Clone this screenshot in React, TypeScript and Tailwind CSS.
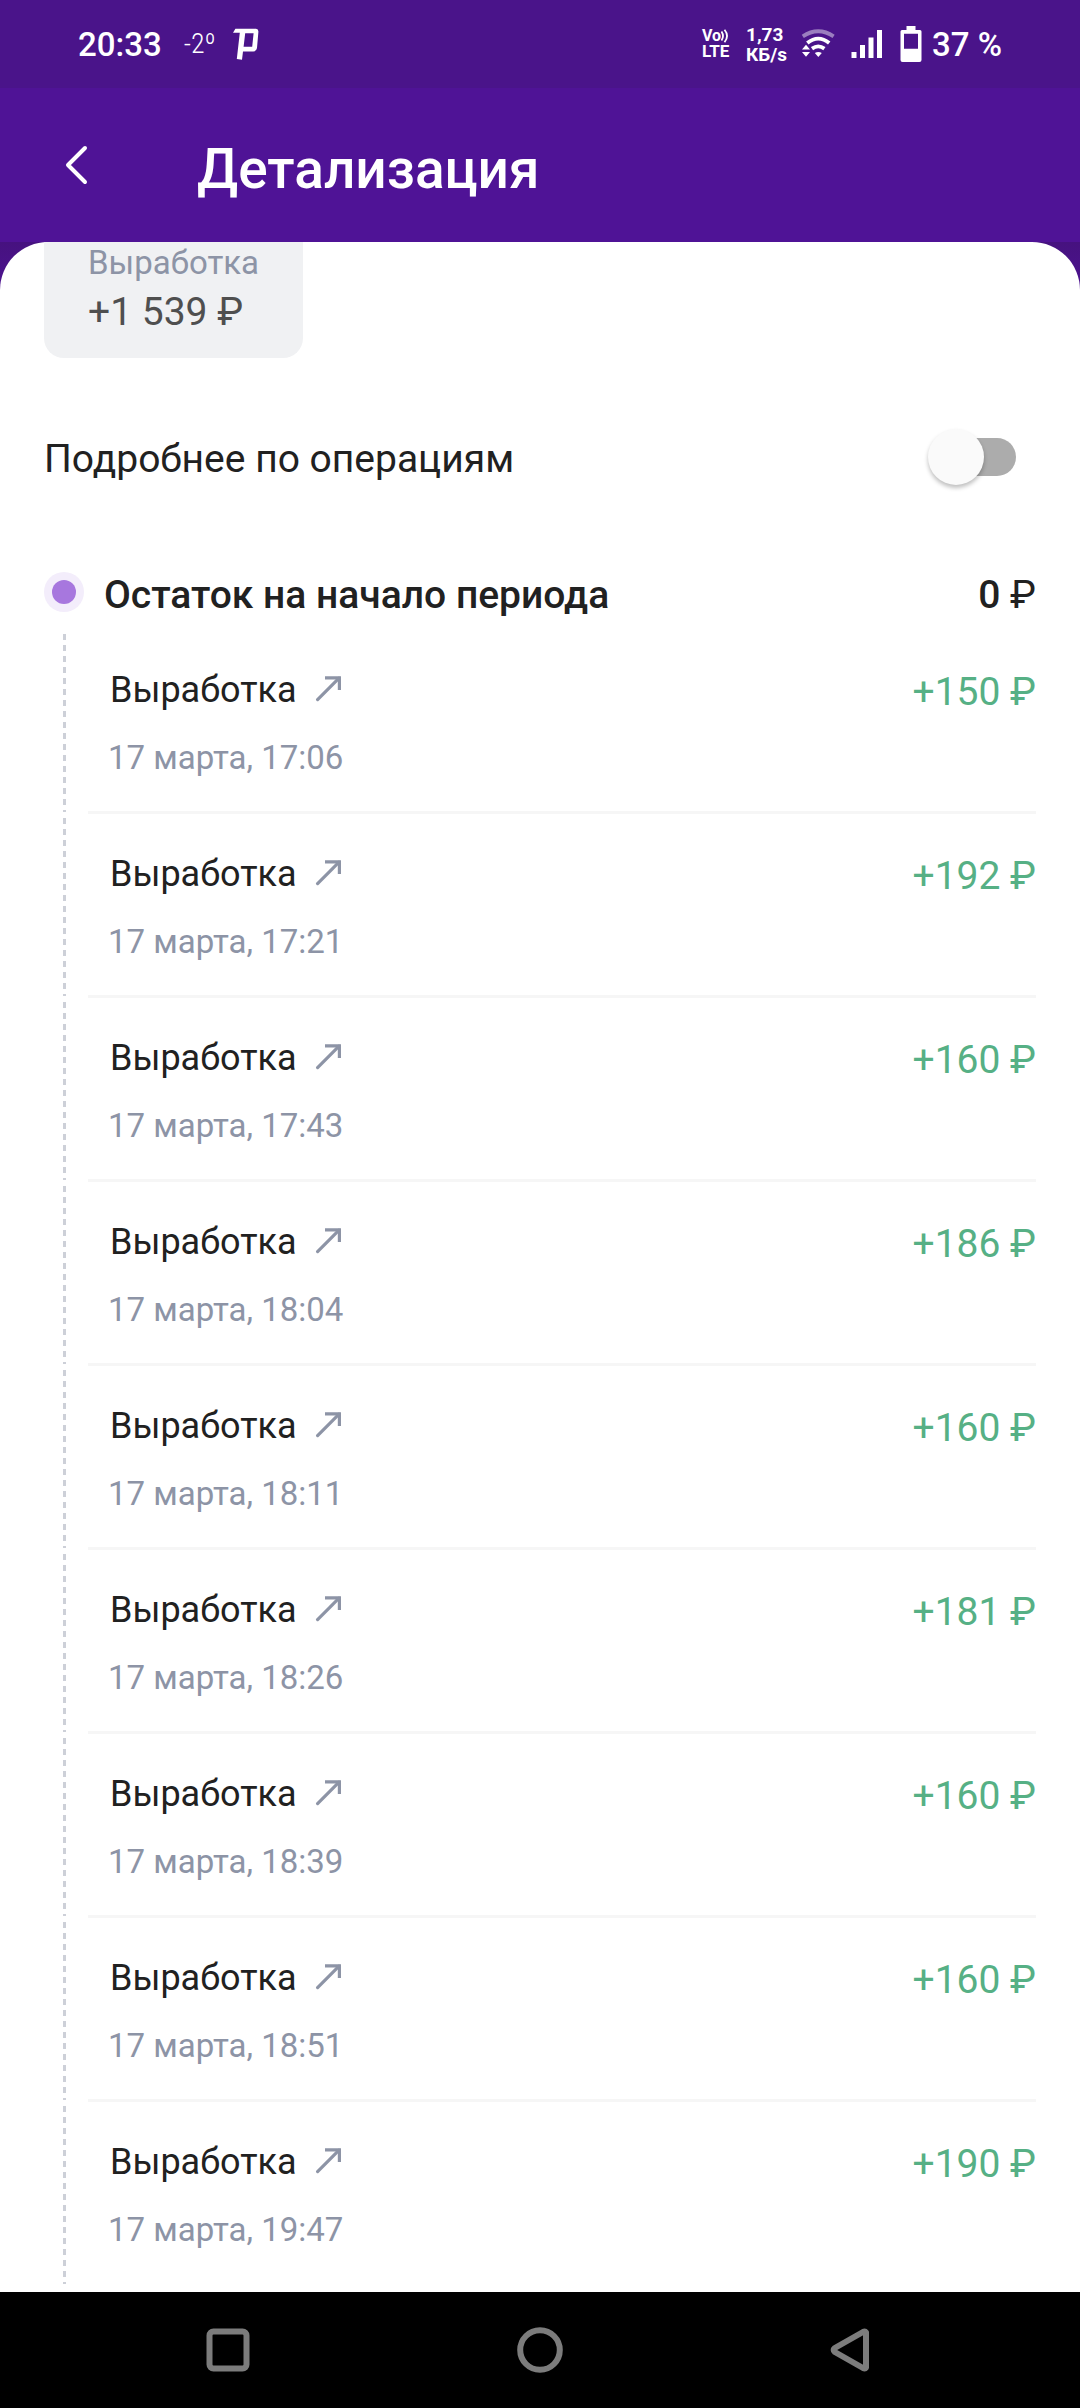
import { useState } from "react";

type Operation = {
  title: string;
  date: string;
  amount: string;
};

const operations: Operation[] = [
  { title: "Выработка", date: "17 марта, 17:06", amount: "+150 ₽" },
  { title: "Выработка", date: "17 марта, 17:21", amount: "+192 ₽" },
  { title: "Выработка", date: "17 марта, 17:43", amount: "+160 ₽" },
  { title: "Выработка", date: "17 марта, 18:04", amount: "+186 ₽" },
  { title: "Выработка", date: "17 марта, 18:11", amount: "+160 ₽" },
  { title: "Выработка", date: "17 марта, 18:26", amount: "+181 ₽" },
  { title: "Выработка", date: "17 марта, 18:39", amount: "+160 ₽" },
  { title: "Выработка", date: "17 марта, 18:51", amount: "+160 ₽" },
  { title: "Выработка", date: "17 марта, 19:47", amount: "+190 ₽" },
];

function ParkingIcon() {
  return (
    <svg className="h-8 w-7" viewBox="0 0 28 32" fill="currentColor" fillRule="evenodd">
      <path d="M1 4.8L3.4 0.8H24Q26.6 1 26.4 3.8L25 20Q24.4 23.6 21.2 23.6H11L10 31.8L4.8 31L7.8 4.8ZM13.2 5.2L11.6 18.8H20.2L21.6 5.2Z" />
    </svg>
  );
}

function VolteIcon() {
  return (
    <div className="flex w-8 flex-col font-bold">
      <div className="flex h-3.5 items-center">
        <span className="text-base leading-[14px]">Vo</span>
        <svg className="h-3.5 w-2" viewBox="0 0 8 14" fill="none" stroke="currentColor" strokeWidth="1.8">
          <path d="M0.5 2.5Q3.5 7 0.5 11.5" />
          <path d="M3.5 0.8Q8.6 7 3.5 13.2" />
        </svg>
      </div>
      <span className="text-[17px] leading-4">LTE</span>
    </div>
  );
}

function WifiIcon() {
  return (
    <svg className="h-8 w-[34px]" viewBox="0 0 34 32" fill="none" stroke="currentColor" strokeWidth="3.8">
      <path d="M1.8 8.4Q17.3 -1.8 32.6 8.4" opacity="0.45" />
      <path d="M6.3 15Q17.3 6.2 28.2 15" />
      <path d="M11 20.6Q17.3 16.2 23.4 20.6" />
      <path d="M17.3 29L13.8 25Q17.3 22.8 20.8 25Z" fill="currentColor" stroke="none" />
      <path d="M1 21.6L5 16.8L9 21.6ZM1 24L5 28.8L9 24Z" fill="currentColor" stroke="none" />
    </svg>
  );
}

function SignalIcon() {
  return (
    <svg className="h-7 w-8" viewBox="0 0 32 28" fill="currentColor">
      <path d="M0.5 22H5.5V28H0.5ZM9 15H14V28H9ZM17.5 7.5H22.5V28H17.5ZM26 0H31V28H26Z" />
    </svg>
  );
}

function BatteryIcon() {
  return (
    <svg className="h-9 w-[22px]" viewBox="0 0 22 36" fill="currentColor" fillRule="evenodd">
      <path d="M6.5 0H15.5V4H20Q21.5 4 21.5 5.5V34Q21.5 36 19.5 36H2.5Q0.5 36 0.5 34V5.5Q0.5 4 2 4H6.5ZM4 7.8V22.8H18V7.8Z" />
    </svg>
  );
}

function StatusBar() {
  return (
    <div className="flex h-[88px] items-center justify-between bg-[#4a148a] px-[78px] text-white">
      <div className="flex items-center">
        <span className="pt-0.5 text-[33px] leading-10 font-medium">20:33</span>
        <span className="ml-[22px] font-['Roboto_Condensed',Roboto,sans-serif] text-[28px] leading-10 font-light">-2º</span>
        <span className="ml-4">
          <ParkingIcon />
        </span>
      </div>
      <div className="flex items-center">
        <VolteIcon />
        <div className="ml-3 pt-0.5 text-[19px] leading-5 font-bold">
          <p>1,73</p>
          <p>КБ/s</p>
        </div>
        <div className="ml-3.5 flex items-center">
          <WifiIcon />
        </div>
        <div className="ml-4 flex items-center gap-[17px]">
          <SignalIcon />
          <BatteryIcon />
        </div>
        <span className="ml-2.5 pt-0.5 text-[33px] leading-10 font-medium">37 %</span>
      </div>
    </div>
  );
}

function Header() {
  return (
    <header className="flex h-[154px] items-center bg-[#4f1396] px-11 text-white">
      <button type="button" aria-label="Назад" className="flex h-16 w-16 items-center justify-center">
        <svg className="h-10 w-6" viewBox="0 0 24 40" fill="none" stroke="currentColor" strokeWidth="4" strokeLinecap="round" strokeLinejoin="round">
          <path d="M21 3L4 20L21 37" />
        </svg>
      </button>
      <h1 className="ml-[89px] pt-2 text-[55px] leading-[64px] font-medium">Детализация</h1>
    </header>
  );
}

function OperationRow({ operation, last }: { operation: Operation; last: boolean }) {
  return (
    <li className="flex gap-[22px] pl-[19px]">
      <div className="mt-1 mb-0.5 w-[3px] bg-[repeating-linear-gradient(to_bottom,#cdd0d8_0px,#cdd0d8_6px,transparent_6px,transparent_11px)]" />
      <div
        className={
          last
            ? "flex flex-1 items-start justify-between border-b-[3px] border-transparent pt-[38px] pb-[33px] pl-5"
            : "flex flex-1 items-start justify-between border-b-[3px] border-[#f6f6f6] pt-[38px] pb-[33px] pl-5"
        }
      >
        <div>
          <a href="#" className="flex items-center gap-[18px] pl-0.5 text-[36px] leading-[44px] text-[#212121]">
            {operation.title}
            <svg className="h-7 w-7 text-[#8d94a6]" viewBox="0 3 28 28" fill="none" stroke="currentColor" strokeWidth="3.2">
              <path d="M10 4.8H24.4V17" />
              <path d="M24 5.2L2.6 26.6" strokeLinecap="round" />
            </svg>
          </a>
          <p className="mt-[26px] text-[33px] leading-10 text-[#8d94a6]">{operation.date}</p>
        </div>
        <span className="text-[39px] leading-[48px] text-[#56b085]">{operation.amount}</span>
      </div>
    </li>
  );
}

function NavigationBar() {
  return (
    <nav className="grid h-[116px] grid-cols-3 items-center bg-black px-[72px] text-[#7c7c7c]">
      <button type="button" aria-label="Недавние" className="flex justify-center">
        <svg className="h-12 w-12" viewBox="0 0 48 48" fill="none" stroke="currentColor" strokeWidth="6">
          <rect x="5.5" y="5.5" width="37" height="37" rx="4" />
        </svg>
      </button>
      <button type="button" aria-label="Домой" className="flex justify-center">
        <svg className="h-12 w-12" viewBox="0 0 48 48" fill="none" stroke="currentColor" strokeWidth="6">
          <circle cx="24" cy="24" r="19.8" />
        </svg>
      </button>
      <button type="button" aria-label="Назад" className="flex justify-center">
        <svg className="h-12 w-12" viewBox="0 0 48 48" fill="none" stroke="currentColor" strokeWidth="6" strokeLinejoin="round">
          <path d="M38 6.5V41.5Q37 43 35 42L6.8 26Q4.5 24 6.8 22L35 6Q37 5 38 6.5Z" />
        </svg>
      </button>
    </nav>
  );
}

export default function App() {
  const [detailed, setDetailed] = useState(false);

  return (
    <div className="flex min-h-screen flex-col bg-white font-[Roboto,'Noto_Sans',sans-serif]">
      <StatusBar />
      <Header />
      <div className="flex-1 bg-[linear-gradient(to_bottom,#46127f_0px,#4d1391_48px,#ffffff_48px)]">
        <main className="overflow-hidden rounded-t-[48px] bg-white px-11 pb-1.5">
          <section className="-mt-6 w-fit rounded-[20px] bg-[#f0f1f3] px-11 pt-[25px] pb-[22px]">
            <p className="text-[33px] leading-10 text-[#8d94a6]">Выработка</p>
            <p className="mt-[5px] text-[39px] leading-[48px] text-[#4f4f4f]">+1 539 ₽</p>
          </section>

          <label className="mt-[77px] flex items-center justify-between pr-5 text-[39px] leading-[48px] text-[#212121]">
            Подробнее по операциям
            <input
              type="checkbox"
              role="switch"
              checked={detailed}
              onChange={(event) => setDetailed(event.target.checked)}
              className="relative mb-1 h-[38px] w-20 appearance-none rounded-full bg-[#acacac] before:absolute before:-top-[9px] before:-left-2 before:h-14 before:w-14 before:rounded-full before:bg-[#fafafa] before:shadow-[0_3px_4px_rgba(0,0,0,0.25)] checked:bg-[#c9a8ef] checked:before:left-8 checked:before:bg-[#a777de]"
            />
          </label>

          <section className="mt-[88px]">
            <div className="flex items-center text-[39px] leading-[48px] font-medium text-[#212121]">
              <span className="mb-1.5 flex h-[38px] w-10 items-center justify-center">
                <span className="flex h-10 w-10 shrink-0 items-center justify-center rounded-full bg-[#f3edfb]">
                  <span className="h-6 w-6 rounded-full bg-[#a777de]" />
                </span>
              </span>
              <h2 className="ml-5 flex-1 font-medium">Остаток на начало периода</h2>
              <span>
                0 <span className="font-normal">₽</span>
              </span>
            </div>
            <ul className="mt-[11px]">
              {operations.map((operation, index) => (
                <OperationRow key={operation.date} operation={operation} last={index === operations.length - 1} />
              ))}
            </ul>
          </section>
        </main>
      </div>
      <NavigationBar />
    </div>
  );
}
